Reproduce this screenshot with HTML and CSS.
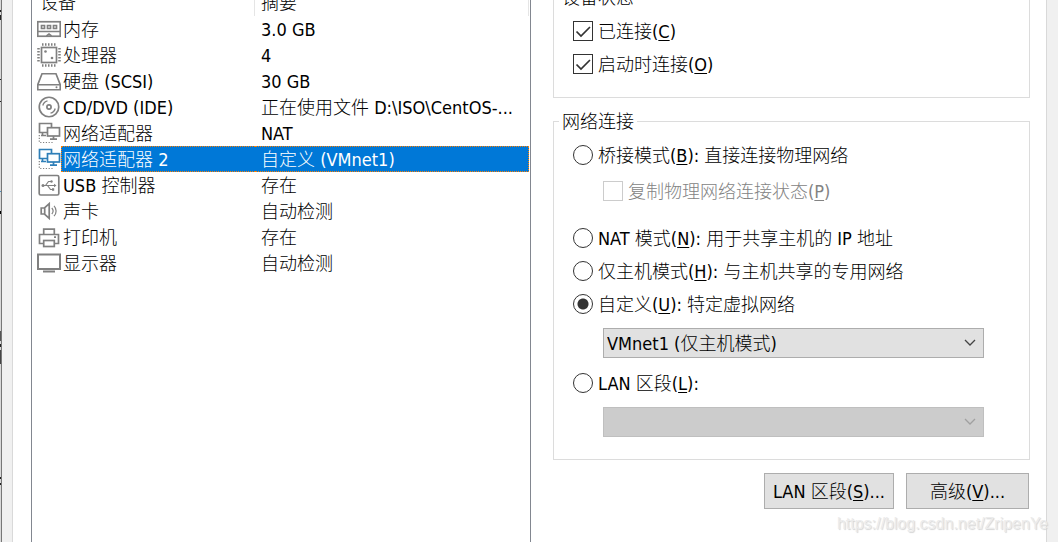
FILE: index.html
```html
<!DOCTYPE html>
<html lang="zh-CN">
<head>
    <meta charset="utf-8">
    <title>虚拟机设置</title>
    <link rel="stylesheet" href="styles.css">
</head>
<body>
    <div class="window-edge"></div>
    <main class="dialog">
        <div class="device-list">
            <table class="devices">
                <colgroup>
                    <col class="col-icon">
                    <col class="col-name">
                    <col>
                </colgroup>
                <thead>
                    <tr>
                        <th colspan="2">设备</th>
                        <th>摘要</th>
                    </tr>
                </thead>
                <tbody>
                    <tr>
                        <td class="icon"><svg viewBox="0 0 24 24"><rect x=".75" y="4.75" width="22.5" height="14.5"/><path d="M1 14.5h22M9.5 19l2.5-2 2.5 2"/><path d="M4.5 8.5h3v3h-3zM10.5 8.5h3v3h-3zM16.5 8.5h3v3h-3z"/></svg></td>
                        <td>内存</td>
                        <td>3.0 GB</td>
                    </tr>
                    <tr>
                        <td class="icon"><svg viewBox="0 0 24 24"><rect x="4.5" y="4.5" width="15" height="15"/><path stroke-width="2.5" stroke-dasharray="1.5 1.5" d="M5 1.5h14M5 22.5h14M1.5 5v14M22.5 5v14"/><circle class="fill" cx="8.5" cy="8.5" r="1.3"/><circle class="fill" cx="15" cy="15" r="1.3"/></svg></td>
                        <td>处理器</td>
                        <td>4</td>
                    </tr>
                    <tr>
                        <td class="icon"><svg viewBox="0 0 24 24"><path d="M5 4.75h14l4.25 11v5H.75v-5zM1 15.75h22"/><circle class="fill" cx="19.5" cy="18.3" r="1"/></svg></td>
                        <td>硬盘 (SCSI)</td>
                        <td>30 GB</td>
                    </tr>
                    <tr>
                        <td class="icon"><svg viewBox="0 0 24 24"><circle cx="12" cy="12" r="9.75"/><circle cx="12" cy="12" r="2.1"/><path stroke-width="1.3" d="M5.8 10.5a6.4 6.4 0 0 1 4.7-4.7M18.2 13.5a6.4 6.4 0 0 1-4.7 4.7"/></svg></td>
                        <td>CD/DVD (IDE)</td>
                        <td>正在使用文件 D:\ISO\CentOS-...</td>
                    </tr>
                    <tr>
                        <td class="icon"><svg viewBox="0 0 24 24"><path d="M10 11.5H2.5v-9h12v4M5.5 11.5v3M4 14.5h5"/><rect x="10.5" y="6.7" width="12" height="8.3"/><path d="M16.5 15v3M13 18.2h7"/><path stroke-width="1.2" stroke-dasharray="1.2 1.6" d="M2.3 14v7.5H15v-2"/></svg></td>
                        <td>网络适配器</td>
                        <td>NAT</td>
                    </tr>
                    <tr class="selected">
                        <td class="icon"><svg viewBox="0 0 24 24"><path d="M10 11.5H2.5v-9h12v4M5.5 11.5v3M4 14.5h5"/><rect x="10.5" y="6.7" width="12" height="8.3"/><path d="M16.5 15v3M13 18.2h7"/><path class="grey" stroke-width="1.2" stroke-dasharray="1.2 1.6" d="M2.3 14v7.5H15v-2"/></svg></td>
                        <td>网络适配器 2</td>
                        <td>自定义 (VMnet1)</td>
                    </tr>
                    <tr>
                        <td class="icon"><svg viewBox="0 0 24 24"><rect x="2.2" y="2.5" width="19.6" height="19.5" rx="1.5"/><path stroke-width="1.2" d="M6 12.5h12M8.5 12.5l3-4h2.5M10.5 12.5l3 4h2"/><circle class="fill" cx="6" cy="12.5" r="1.5"/><circle class="fill" cx="14.5" cy="8.5" r="1.2"/><path class="fill" d="M15 15.3h2.2v2.4H15zM17 10.8l2.5 1.7-2.5 1.7z"/></svg></td>
                        <td>USB 控制器</td>
                        <td>存在</td>
                    </tr>
                    <tr>
                        <td class="icon"><svg viewBox="0 0 24 24"><path d="M4.2 9v6h3.3l4.7 4.3V4.7L7.5 9zM7.7 9v6"/><path stroke-width="1.2" d="M14.8 9a4.5 4.5 0 0 1 0 6M17 6.8a7.5 7.5 0 0 1 0 10.4"/></svg></td>
                        <td>声卡</td>
                        <td>自动检测</td>
                    </tr>
                    <tr>
                        <td class="icon"><svg viewBox="0 0 24 24"><path d="M6.7 9.5V4.2h10.6v5.3M6.7 18.5H2.5v-9h19v9h-4.2"/><rect x="6.7" y="15.5" width="10.6" height="6"/><path d="M17 12.2h2"/></svg></td>
                        <td>打印机</td>
                        <td>存在</td>
                    </tr>
                    <tr>
                        <td class="icon"><svg viewBox="0 0 24 24"><rect stroke-width="2" x="1" y="3.5" width="22" height="14.5"/><path stroke-width="2" d="M6 20.5h12"/></svg></td>
                        <td>显示器</td>
                        <td>自动检测</td>
                    </tr>
                </tbody>
            </table>
        </div>

        <form class="settings">
            <fieldset>
                <legend>设备状态</legend>
                <label class="option"><input type="checkbox" checked><span>已连接(<u>C</u>)</span></label>
                <label class="option"><input type="checkbox" checked><span>启动时连接(<u>O</u>)</span></label>
            </fieldset>

            <fieldset class="network">
                <legend>网络连接</legend>
                <label class="option"><input type="radio" name="net"><span>桥接模式(<u>B</u>): 直接连接物理网络</span></label>
                <label class="option nested"><input type="checkbox" disabled><span>复制物理网络连接状态(<u>P</u>)</span></label>
                <label class="option"><input type="radio" name="net"><span>NAT 模式(<u>N</u>): 用于共享主机的 IP 地址</span></label>
                <label class="option"><input type="radio" name="net"><span>仅主机模式(<u>H</u>): 与主机共享的专用网络</span></label>
                <label class="option"><input type="radio" name="net" checked><span>自定义(<u>U</u>): 特定虚拟网络</span></label>
                <select aria-label="特定虚拟网络">
                    <option>VMnet1 (仅主机模式)</option>
                </select>
                <label class="option"><input type="radio" name="net"><span>LAN 区段(<u>L</u>):</span></label>
                <select aria-label="LAN 区段" disabled></select>
            </fieldset>

            <div class="buttons">
                <button type="button">LAN 区段(<u>S</u>)...</button>
                <button type="button">高级(<u>V</u>)...</button>
            </div>
        </form>
    </main>
    <div class="watermark">https://blog.csdn.net/ZripenYe</div>
</body>
</html>
```
FILE: styles.css
```css
* {
    box-sizing: border-box;
}
body {
    display: flex;
    margin: 0;
    height: 100vh;
    overflow: hidden;
    position: relative;
    background-color: #f0f0f0;
    color: #000;
    font-family: "DejaVu Sans Condensed", "Noto Sans CJK SC", sans-serif;
    font-size: 18px;
    font-weight: 300;
}

/* sliver of the window behind the dialog */
.window-edge {
    flex: none;
    width: 2px;
    margin-right: 10px;
    border-right: 1px solid #777;
    background: linear-gradient(#d8d8d8 10px, #222 10px, #222 12px, #d8d8d8 12px, #d8d8d8 15px, #222 15px, #222 20px, #d8d8d8 20px, #d8d8d8 79px, #222 79px, #222 80px, #d8d8d8 80px, #d8d8d8 101px, #222 101px, #222 102px, #d8d8d8 102px, #d8d8d8 191px, #4a90c0 191px, #4a90c0 192px, #d8d8d8 192px, #d8d8d8 211px, #000 211px, #000 214px, #d8d8d8 214px, #d8d8d8 331px, #555 331px, #555 341px, #d8d8d8 341px, #d8d8d8 344px, #222 344px, #222 347px, #d8d8d8 347px, #d8d8d8 350px, #444 350px, #444 364px, #d8d8d8 364px, #d8d8d8 477px, #222 477px, #222 479px, #d8d8d8 479px, #d8d8d8 483px, #222 483px, #222 485px, #d8d8d8 485px);
}

.dialog {
    flex: 1;
    display: grid;
    grid-template-columns: 500fr 477fr;
    gap: 22px;
    margin: -12px 11px 0 0;
    padding: 0 16px 0 18px;
    border: solid #d9d9d9;
    border-width: 0 1px;
    background-color: #fff;
}

.device-list {
    min-width: 0;
    padding-right: 1px;
    border: solid #828790;
    border-width: 0 1px;
}
.devices {
    width: 100%;
    table-layout: fixed;
    border-collapse: separate;
    border-spacing: 0;
}
.col-icon {
    width: 29px;
}
.col-name {
    width: 194px;
}
.devices th {
    height: 28px;
    padding: 2px 8px 0;
    border-right: 1px solid #e5e5e5;
    font-weight: 300;
    line-height: 26px;
    text-align: left;
}
.devices td {
    height: 26px;
    padding: 2px 2px 0;
    line-height: 24px;
    white-space: nowrap;
    overflow: hidden;
}
.devices th:last-child,
.devices td:last-child {
    padding-left: 6px;
}
.devices .icon {
    padding: 0 0 0 5px;
}
.icon svg {
    display: block;
    width: 24px;
    height: 24px;
    fill: none;
    stroke: #808080;
    stroke-width: 1.7;
}
.icon .fill {
    fill: #808080;
    stroke: none;
}
.selected .icon svg {
    stroke: #2f7fb8;
}
.selected .icon .grey {
    stroke: #808080;
}
.selected td:not(.icon) {
    padding-top: 1px;
    border: 1px dotted #ff8000;
    border-width: 1px 0;
    background-color: #0078d7;
    color: #fff;
    line-height: 23px;
}
.selected td:nth-child(2) {
    border-left-width: 1px;
    padding-left: 1px;
}
.selected td:last-child {
    border-right-width: 1px;
}

.settings {
    min-width: 0;
}
fieldset {
    min-width: 0;
    margin: 0 0 14px;
    padding: 8px 19px 17px;
    border: 1px solid #dcdcdc;
}
legend {
    margin-left: -14px;
    padding: 1px 3px 0;
    line-height: 17px;
}
.network {
    margin-bottom: 13px;
    padding-bottom: 22px;
}
.option {
    display: flex;
    align-items: center;
    gap: 5px;
    height: 33px;
    white-space: nowrap;
}
.option span {
    padding-bottom: 2px;
}
.nested {
    margin: 3px 0 14px 30px;
    color: #838383;
}
u {
    text-underline-offset: 2px;
}
input {
    appearance: none;
    flex: none;
    width: 20px;
    height: 20px;
    margin: 0;
    border: 1px solid #333;
    background: #fff center no-repeat;
}
input[type="radio"] {
    border-radius: 50%;
}
input[type="radio"]:checked {
    background-image: radial-gradient(circle, #333 5px, transparent 6px);
}
input[type="checkbox"]:checked {
    background-image: url("data:image/svg+xml,%3Csvg xmlns='http://www.w3.org/2000/svg' width='18' height='18'%3E%3Cpath d='M2.5 9.5l4.5 4.5 9-9' fill='none' stroke='%23333' stroke-width='1.7'/%3E%3C/svg%3E");
}
input:disabled {
    border-color: #ccc;
}
select {
    appearance: none;
    display: block;
    width: calc(100% - 56px);
    height: 30px;
    margin: 8px 0 8px 30px;
    padding: 0 24px 0 3px;
    border: 1px solid #adadad;
    border-radius: 0;
    background: #e1e1e1 url("data:image/svg+xml,%3Csvg xmlns='http://www.w3.org/2000/svg' width='12' height='8'%3E%3Cpath d='M1 1l5 5 5-5' fill='none' stroke='%23444' stroke-width='1.3'/%3E%3C/svg%3E") right 7px center no-repeat;
    color: #000;
    font: inherit;
}
select:disabled {
    margin-bottom: 0;
    border-color: #bfbfbf;
    background-color: #ccc;
    background-image: url("data:image/svg+xml,%3Csvg xmlns='http://www.w3.org/2000/svg' width='12' height='8'%3E%3Cpath d='M1 1l5 5 5-5' fill='none' stroke='%23a0a0a0' stroke-width='1.3'/%3E%3C/svg%3E");
    opacity: 1;
}
.buttons {
    display: flex;
    justify-content: flex-end;
    gap: 12px;
    padding-right: 1px;
}
button {
    min-width: 123px;
    height: 36px;
    padding: 0 8px 2px;
    border: 1px solid #adadad;
    background-color: #e1e1e1;
    color: #000;
    font: inherit;
    white-space: nowrap;
}

.watermark {
    position: absolute;
    right: 10px;
    bottom: 8px;
    color: #ececec;
    font-family: "Liberation Sans", sans-serif;
    font-size: 16px;
    font-weight: 400;
    line-height: 20px;
    text-shadow: 1px 1px 1px #d4d4d4;
}
```
